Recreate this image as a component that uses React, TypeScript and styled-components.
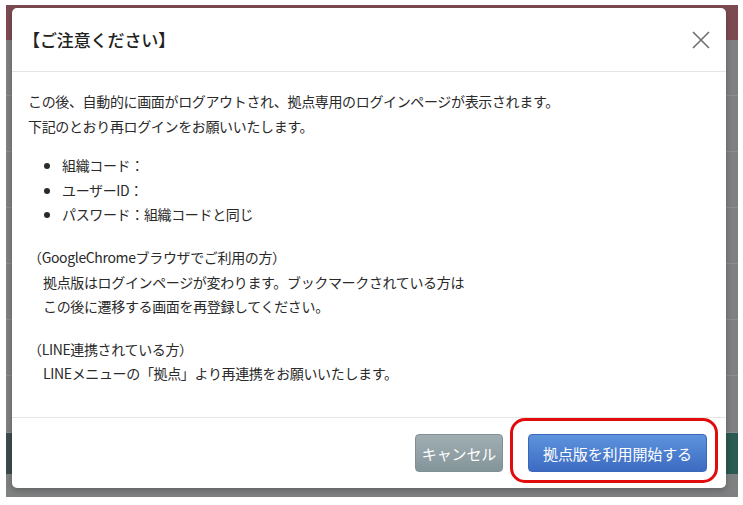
import React from "react";
import styled, { createGlobalStyle } from "styled-components";

const Global = createGlobalStyle`
  html, body { margin: 0; padding: 0; background: #ffffff; }
  body { font-family: "Noto Sans CJK JP", "Noto Sans", sans-serif; color: #333; }
`;

const Stage = styled.div`
  position: relative;
  margin: 5px 5px 0 6px;
  height: 492px;
  background: #7f8081;
  overflow: hidden;
  display: flex;
  flex-direction: column;
`;

const TopBand = styled.div`
  height: 35px;
  background: #7c4b51;
  flex: none;
`;

const BgRow = styled.div<{ $h: number; $dark?: boolean }>`
  height: ${(p) => p.$h}px;
  flex: none;
  border-bottom: 1px solid ${(p) => (p.$dark ? "transparent" : "#8d8e8f")};
  background: ${(p) =>
    p.$dark ? "linear-gradient(90deg, #3e4b4c 0 40px, #2a5a51 40px)" : "transparent"};
`;

const Modal = styled.div`
  position: absolute;
  top: 3px;
  left: 6px;
  width: 714px;
  height: 480px;
  background: #fff;
  border-radius: 5px;
  box-shadow: 0 2px 6px rgba(0, 0, 0, 0.25);
  display: flex;
  flex-direction: column;
`;

const Header = styled.div`
  height: 63px;
  flex: none;
  border-bottom: 1px solid #e5e5e5;
  display: flex;
  align-items: center;
  justify-content: space-between;
  padding: 0 14px 0 11px;
`;

const Title = styled.h2`
  margin: 0;
  font-size: 17px;
  font-weight: 500;
  color: #222;
  letter-spacing: -0.1px;
`;

const CloseButton = styled.button`
  border: none;
  background: none;
  padding: 0;
  width: 22px;
  height: 22px;
  display: flex;
  align-items: center;
  justify-content: center;
  cursor: pointer;
`;

const Body = styled.div`
  flex: 1;
  padding: 17px 16px 0 16px;
  font-size: 14px;
  line-height: 24.6px;
  letter-spacing: -0.35px;
  color: #2a2a2a;
`;

const Para = styled.p<{ $gap?: number }>`
  margin: ${(p) => p.$gap ?? 0}px 0 0 0;
`;

const Indent = styled.span`
  display: block;
  padding-left: 15px;
`;

const List = styled.ul`
  margin: 15px 0 0 0;
  padding: 0 0 0 34px;
  list-style: none;
`;

const Item = styled.li`
  position: relative;
  &::before {
    content: "";
    position: absolute;
    left: -18px;
    top: 10px;
    width: 6px;
    height: 6px;
    border-radius: 50%;
    background: #2a2a2a;
  }
`;

const Footer = styled.div`
  height: 70px;
  flex: none;
  border-top: 1px solid #e5e5e5;
  display: flex;
  align-items: center;
  justify-content: flex-end;
  gap: 25px;
  padding: 0 19px 0 0;
`;

const Button = styled.button<{ $variant: "cancel" | "primary" }>`
  height: 38px;
  border-radius: 4px;
  border: 1px solid ${(p) => (p.$variant === "primary" ? "#3a67b8" : "#7f8f94")};
  background: ${(p) =>
    p.$variant === "primary"
      ? "linear-gradient(180deg, #5e93dd 0%, #3c6bc2 100%)"
      : "linear-gradient(180deg, #a0aeb2 0%, #84959a 100%)"};
  color: #fff;
  font-family: "Noto Sans CJK JP", sans-serif;
  font-size: 15px;
  letter-spacing: -0.1px;
  white-space: nowrap;
  padding: 0;
  width: ${(p) => (p.$variant === "primary" ? 179 : 88)}px;
  cursor: pointer;
`;

const Highlight = styled.span`
  position: relative;
  display: inline-flex;
  &::after {
    content: "";
    position: absolute;
    top: -16px;
    left: -18px;
    right: -11px;
    bottom: -11px;
    border: 3px solid #e10c0c;
    border-radius: 15px;
    pointer-events: none;
  }
`;

export default function App() {
  return (
    <>
      <Global />
      <Stage>
        <TopBand />
        <BgRow $h={55} />
        <BgRow $h={55} />
        <BgRow $h={55} />
        <BgRow $h={55} />
        <BgRow $h={55} />
        <BgRow $h={55} />
        <BgRow $h={56} />
        <BgRow $h={40} $dark />
        <Modal>
          <Header>
            <Title>【ご注意ください】</Title>
            <CloseButton aria-label="閉じる">
              <svg width="20" height="20" viewBox="0 0 20 20">
                <path d="M2 2 L18 18 M18 2 L2 18" stroke="#6f6f6f" strokeWidth="1.6" fill="none" />
              </svg>
            </CloseButton>
          </Header>
          <Body>
            <Para>
              この後、自動的に画面がログアウトされ、拠点専用のログインページが表示されます。
              <br />
              下記のとおり再ログインをお願いいたします。
            </Para>
            <List>
              <Item>組織コード：</Item>
              <Item>ユーザーID：</Item>
              <Item>パスワード：組織コードと同じ</Item>
            </List>
            <Para $gap={18}>
              （GoogleChromeブラウザでご利用の方）
              <Indent>拠点版はログインページが変わります。ブックマークされている方は</Indent>
              <Indent>この後に遷移する画面を再登録してください。</Indent>
            </Para>
            <Para $gap={18}>
              （LINE連携されている方）
              <Indent>LINEメニューの「拠点」より再連携をお願いいたします。</Indent>
            </Para>
          </Body>
          <Footer>
            <Button $variant="cancel">キャンセル</Button>
            <Highlight>
              <Button $variant="primary">拠点版を利用開始する</Button>
            </Highlight>
          </Footer>
        </Modal>
      </Stage>
    </>
  );
}
